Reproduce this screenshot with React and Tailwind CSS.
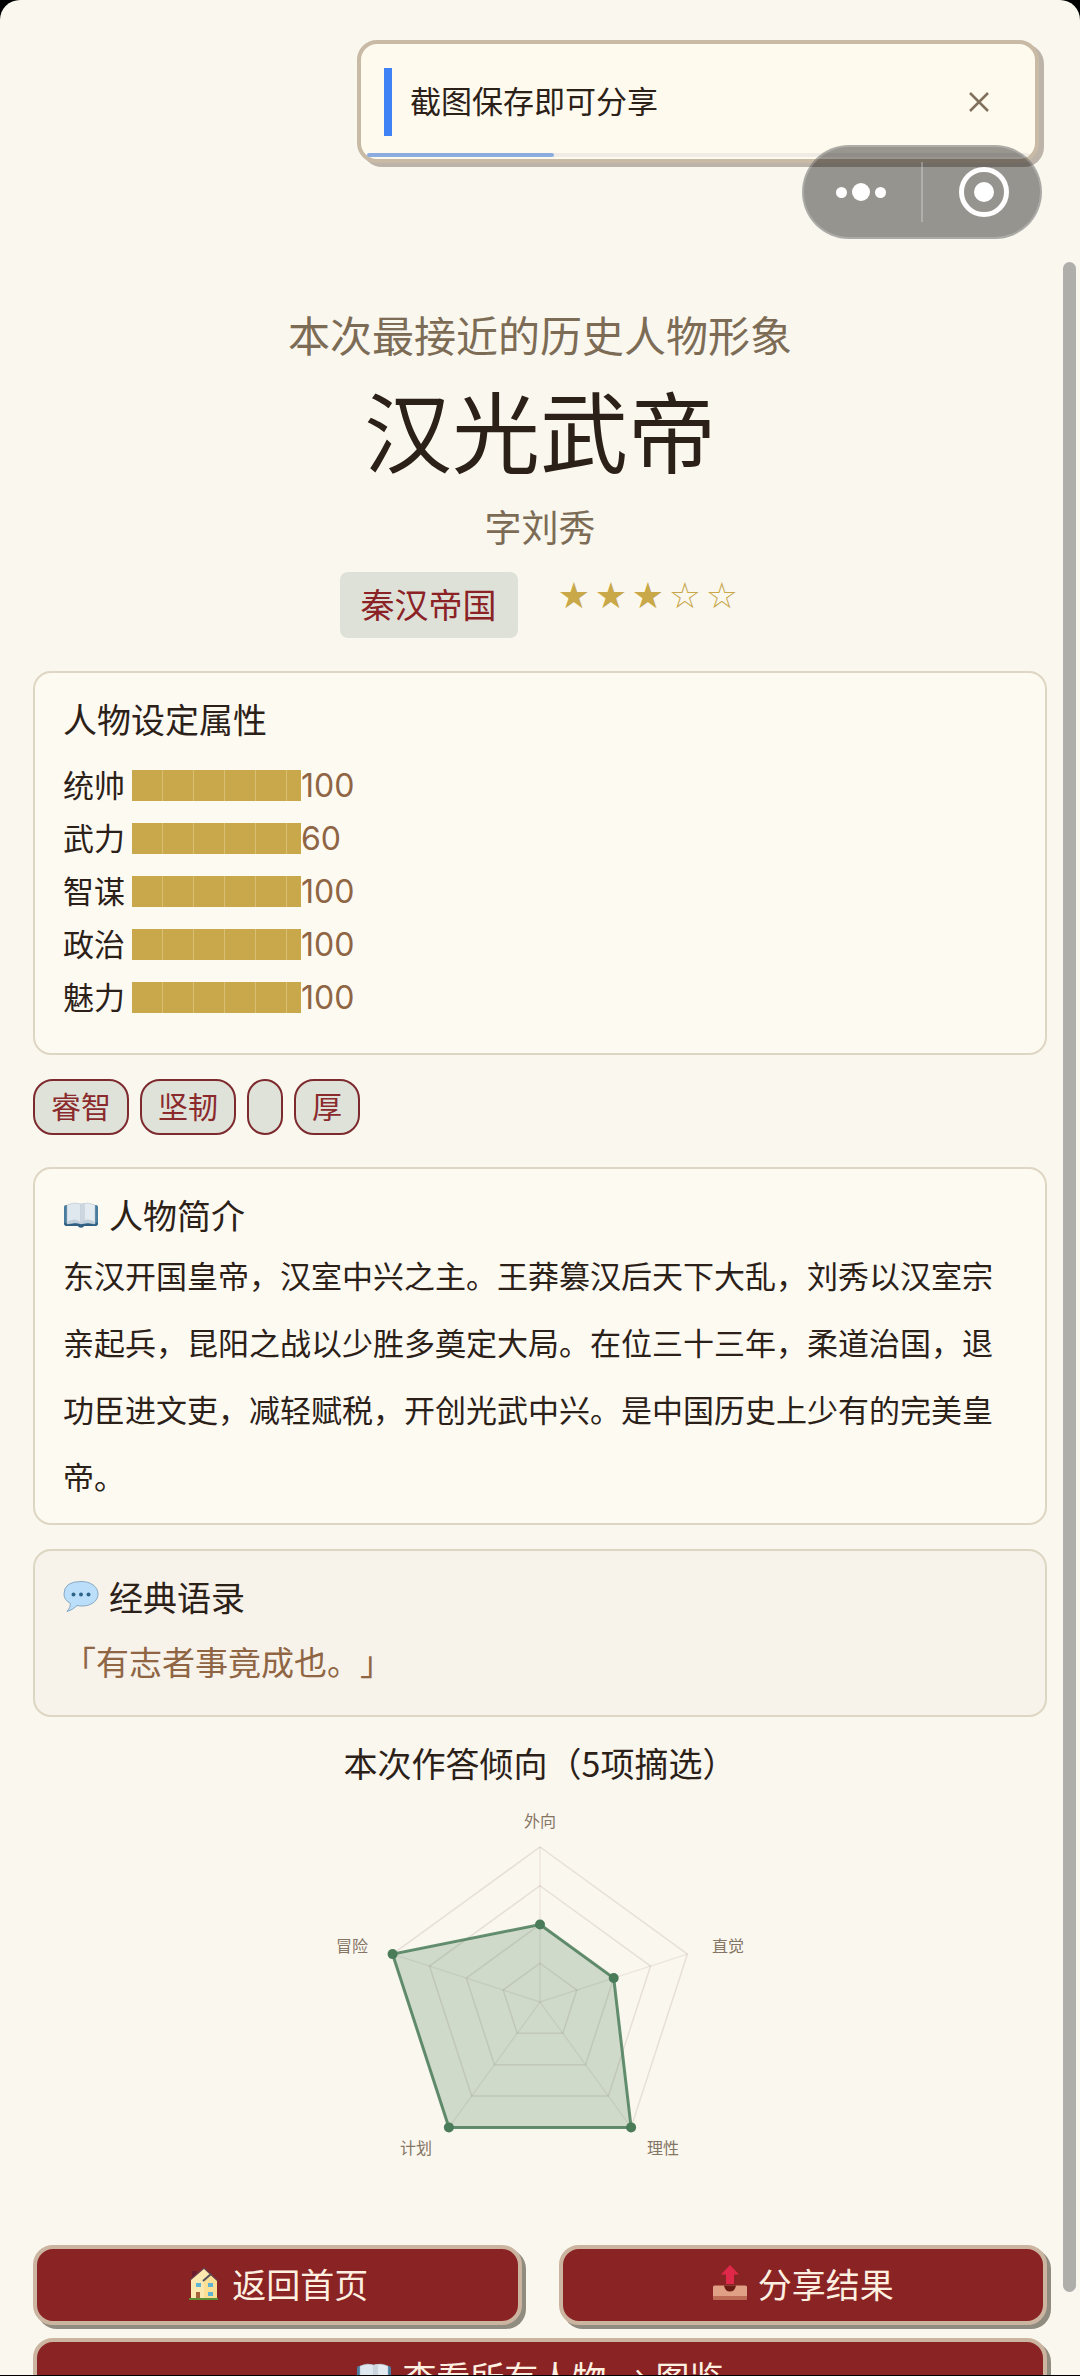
import { clsx } from 'clsx';

const ATTRIBUTES = [
    { name: '统帅', value: 100 },
    { name: '武力', value: 60 },
    { name: '智谋', value: 100 },
    { name: '政治', value: 100 },
    { name: '魅力', value: 100 },
];

const TRAITS = ['睿智', '坚韧', '', '厚'];

const RARITY = 3;

const TENDENCIES = [
    { name: '外向', value: 0.5, x: 0, y: -181 },
    { name: '直觉', value: 0.5, x: 188, y: -56 },
    { name: '理性', value: 1, x: 123, y: 146 },
    { name: '计划', value: 1, x: -124, y: 146 },
    { name: '冒险', value: 1, x: -188, y: -56 },
];

const RADIUS = 155;

const point = (index, ratio) => {
    const angle = (Math.PI * 2 * index) / TENDENCIES.length - Math.PI / 2;
    return [Math.cos(angle) * RADIUS * ratio, Math.sin(angle) * RADIUS * ratio];
};

const ring = (ratio) => TENDENCIES.map((_, i) => point(i, ratio).join(',')).join(' ');

function BookIcon() {
    return (
        <svg viewBox="0 0 36 28" className="h-7 w-9" aria-hidden="true">
            <path d="M1 6q0-2 2-2h30q2 0 2 2v16q0 3-3 3H21q-1 1.500-3 1.500T15 25H4q-3 0-3-3z" fill="#4a7c9e" />
            <path d="M1 21q0 1 2 1h30q2 0 2-1v1q0 3-3 3H21q-1 1.500-3 1.500T15 25H4q-3 0-3-3z" fill="#2f5f82" />
            <path d="M4 4q7-3.500 14-1v20q-3-1.500-7-1t-7 1z" fill="#dfe8ef" stroke="#a9b9c5" strokeWidth="0.500" />
            <path d="M32 4q-7-3.500-14-1v20q3-1.500 7-1t7 1z" fill="#e4ebf1" stroke="#a9b9c5" strokeWidth="0.500" />
            <path d="M18 3q2-1 4-1v19q-2 .5-4 2z" fill="#cbd6df" />
            <path d="M4 21q4-3 8-2.500t6 3.500q2-3 6-3.500t8 2.500v2q-4-1.500-7-1t-7 1q-3-1.500-7-1t-7 1z" fill="#c2d0db" />
        </svg>
    );
}

function SpeechIcon() {
    return (
        <svg viewBox="0 0 36 34" className="h-[34px] w-9" aria-hidden="true">
            <path
                d="M18 1.500C27.500 1.500 35 6.500 35 14S27.500 26 19 26q-3 0-5-.5Q10 30 4 31.500 7.500 28 7.500 23.500 1 20 1 14 1 1.500 18 1.500z"
                fill="#bbdffb"
                stroke="#86a9c4"
            />
            <circle cx="10.500" cy="14.500" r="2" fill="#2f6489" />
            <circle cx="18" cy="14.500" r="2" fill="#2f6489" />
            <circle cx="25.500" cy="14.500" r="2" fill="#2f6489" />
        </svg>
    );
}

function HouseIcon() {
    return (
        <svg viewBox="0 0 36 36" className="size-9" aria-hidden="true">
            <path d="M6 6h5v8H6z" fill="#6d1a2c" />
            <path d="M5 33V14L18 3l13 12v18z" fill="#fbe8b0" />
            <path d="M18 33V15l6-6 7 7v17z" fill="#fadf95" />
            <path d="M4 15L18 3l14 13" fill="none" stroke="#6b3844" strokeWidth="1.500" />
            <path d="M17 16l8-7" fill="none" stroke="#54525c" strokeWidth="2" />
            <path d="M10 18h5v4h-5zM22 18h5v4h-5zM22 27h5v4h-5z" fill="#5fb3d3" />
            <path d="M10 27h4v6h-4z" fill="#a5603c" />
            <path d="M3 33h29v2H3z" fill="#5f8f35" />
        </svg>
    );
}

function OutboxIcon() {
    return (
        <svg viewBox="0 0 36 36" className="size-9" aria-hidden="true">
            <path d="M1 22q0-1.500 1.500-1.500h31Q35 20.500 35 22v11q0 2-2 2H3q-2 0-2-2z" fill="#e0a085" />
            <path d="M1 31h34v2q0 2-2 2H3q-2 0-2-2z" fill="#bd6a56" />
            <path d="M12 20.500h12q-1 6-6 6t-6-6z" fill="#6b1c12" />
            <path d="M18 0l9 9.500h-5V19h-8V9.500H9z" fill="#e0294a" />
        </svg>
    );
}

function Card({ className, children }) {
    return (
        <section className={clsx('rounded-[18px] border-2 border-[#ddd6c2] px-7 pt-5', className)}>
            {children}
        </section>
    );
}

function CardTitle({ icon, children }) {
    return (
        <h2 className="flex h-[52px] items-center gap-[10px] text-[34px] leading-[52px]">
            {icon}
            {children}
        </h2>
    );
}

function ActionButton({ icon, className, children }) {
    return (
        <button
            type="button"
            className={clsx(
                'flex h-20 items-center justify-center gap-[10px] rounded-[20px] border-4 border-[#ccb5a0] bg-[#8a2324] pb-1 text-[34px] text-[#fdf0e0] shadow-[4px_4px_0_#918c80]',
                className,
            )}
        >
            {icon}
            {children}
        </button>
    );
}

function Toast() {
    return (
        <div
            role="status"
            className="absolute top-10 right-[41px] flex h-[123px] w-[682px] items-center rounded-[20px] border-4 border-[#c8baa5] bg-[#fefaee] pl-[23px] shadow-[5px_4px_0_#bcb3a9]"
        >
            <span className="h-[68px] w-2 bg-[#3f82f5]" />
            <p className="flex-1 pb-[3px] pl-[18px] text-[31px]">截图保存即可分享</p>
            <button type="button" aria-label="关闭" className="mr-[42px] p-1 text-[#80705c]">
                <svg viewBox="0 0 20 20" className="size-5" fill="none" stroke="currentColor" strokeWidth="2.500">
                    <path d="M1 1l18 18M19 1L1 19" />
                </svg>
            </button>
            <div className="absolute inset-x-[6px] bottom-[2px] h-1 rounded-full bg-[#f0ebe5]">
                <div className="h-full w-[187px] rounded-full bg-[#8cacdf]" />
            </div>
        </div>
    );
}

function Capsule() {
    return (
        <div className="absolute top-[145px] right-[38px] flex h-[94px] w-60 items-center rounded-full border-2 border-white/20 bg-black/40">
            <button type="button" aria-label="更多" className="flex flex-1 items-center justify-center gap-[5px] pr-1">
                <span className="size-[11px] rounded-full bg-white" />
                <span className="size-[18px] rounded-full bg-white" />
                <span className="size-[11px] rounded-full bg-white" />
            </button>
            <span className="h-[60px] w-[2px] bg-white/25" />
            <button type="button" aria-label="关闭小程序" className="flex flex-1 items-center justify-center pl-1">
                <span className="flex size-[50px] items-center justify-center rounded-full border-5 border-white">
                    <span className="size-5 rounded-full bg-white" />
                </span>
            </button>
        </div>
    );
}

function RadarChart() {
    return (
        <svg viewBox="-225 -195 450 390" className="mx-auto mt-5 h-[390px] w-[450px]" role="img" aria-label="作答倾向">
            <g fill="none" stroke="#7a5c50" strokeOpacity="0.15" strokeWidth="1.500">
                {[0.25, 0.5, 0.75, 1].map((ratio) => (
                    <polygon key={ratio} points={ring(ratio)} />
                ))}
                {TENDENCIES.map((item, i) => (
                    <line key={item.name} x2={point(i, 1)[0]} y2={point(i, 1)[1]} strokeOpacity="0.1" />
                ))}
            </g>
            <polygon
                points={TENDENCIES.map((item, i) => point(i, item.value).join(',')).join(' ')}
                fill="#4a7c59"
                fillOpacity="0.24"
                stroke="#4a7c59"
                strokeOpacity="0.85"
                strokeWidth="3"
            />
            {TENDENCIES.map((item, i) => (
                <circle key={item.name} cx={point(i, item.value)[0]} cy={point(i, item.value)[1]} r="5" fill="#4a7c59" />
            ))}
            {TENDENCIES.map((item) => (
                <text
                    key={item.name}
                    x={item.x}
                    y={item.y + 6}
                    textAnchor="middle"
                    className="fill-[#857565] text-[16px]"
                >
                    {item.name}
                </text>
            ))}
        </svg>
    );
}

export default function App() {
    return (
        <div className="h-screen bg-black pb-px font-['Noto_Sans_CJK_SC',sans-serif] text-[#2c2118] [text-spacing-trim:space-all]">
            <div className="relative h-full overflow-hidden rounded-t-[20px] bg-[#faf7ef]">
                <main className="flex flex-col px-[33px] pt-[304px]">
                    {/* Result header */}
                    <header className="flex flex-col items-center text-center">
                        <p className="text-[42px] leading-[60px] text-[#7d6c55]">本次最接近的历史人物形象</p>
                        <h1 className="mt-2 text-[88px] leading-[112px]">汉光武帝</h1>
                        <p className="mt-[18px] text-[37px] leading-[48px] text-[#7d6c55]">字刘秀</p>
                        <div className="mt-[22px] flex h-[66px] gap-[38px]">
                            <span className="flex items-center rounded-lg bg-[#dee1d8] px-[21px] pb-[3px] text-[34px] text-[#8a2226]">
                                秦汉帝国
                            </span>
                            <span className="flex h-12 items-center font-['DejaVu_Sans',sans-serif] text-[36px] text-[#c9a84a]">
                                {[1, 2, 3, 4, 5].map((n) => (
                                    <span key={n} className="w-[37px] text-center">
                                        {n <= RARITY ? '★' : '☆'}
                                    </span>
                                ))}
                            </span>
                        </div>
                    </header>

                    {/* Attributes */}
                    <Card className="mt-[33px] bg-[#fdfaf2] pb-[29px]">
                        <CardTitle>人物设定属性</CardTitle>
                        <ul className="mt-[14px]">
                            {ATTRIBUTES.map((attr) => (
                                <li key={attr.name} className="flex h-[53px] items-center text-[31px]">
                                    <span className="w-[69px] pb-[3px]">{attr.name}</span>
                                    <span className="flex h-[31px] w-[169px] overflow-hidden bg-[#c8a84a]">
                                        {[1, 2, 3, 4, 5, 6].map((n) => (
                                            <span key={n} className="w-[31px] shrink-0 border-r border-[#d8bf74]" />
                                        ))}
                                    </span>
                                    <span className="font-['Inter',sans-serif] text-[32px] text-[#8f6544]">
                                        {attr.value}
                                    </span>
                                </li>
                            ))}
                        </ul>
                    </Card>

                    {/* Traits */}
                    <ul className="mt-6 flex gap-[11px]">
                        {TRAITS.map((trait, i) => (
                            <li
                                key={i}
                                className="flex h-14 items-center rounded-[20px] border-2 border-[#7d2a2e] bg-[#dfe2d9] px-4 pb-[3px] text-[30px] text-[#8a2a2c]"
                            >
                                {trait}
                            </li>
                        ))}
                    </ul>

                    {/* Biography */}
                    <Card className="mt-8 bg-[#fdfaf2] pb-[14px]">
                        <CardTitle icon={<BookIcon />}>人物简介</CardTitle>
                        <p className="text-[31px] leading-[67px]">
                            东汉开国皇帝，汉室中兴之主。王莽篡汉后天下大乱，刘秀以汉室宗亲起兵，昆阳之战以少胜多奠定大局。在位三十三年，柔道治国，退功臣进文吏，减轻赋税，开创光武中兴。是中国历史上少有的完美皇帝。
                        </p>
                    </Card>

                    {/* Quote */}
                    <Card className="mt-6 bg-[#f7f2ea] pb-[27px]">
                        <CardTitle icon={<SpeechIcon />}>经典语录</CardTitle>
                        <blockquote className="mt-3 text-[33px] leading-[53px] text-[#8f6544]">「有志者事竟成也。」</blockquote>
                    </Card>

                    {/* Answer tendencies */}
                    <section className="mt-[22px]">
                        <h2 className="text-center text-[34px] leading-[48px]">本次作答倾向（5项摘选）</h2>
                        <RadarChart />
                    </section>

                    {/* Actions */}
                    <div className="mt-12 grid grid-cols-2 gap-x-[37px] gap-y-[13px]">
                        <ActionButton icon={<HouseIcon />}>返回首页</ActionButton>
                        <ActionButton icon={<OutboxIcon />}>分享结果</ActionButton>
                        <ActionButton icon={<BookIcon />} className="col-span-2">
                            查看所有人物 → 图鉴
                        </ActionButton>
                    </div>
                </main>

                <Toast />
                <Capsule />
                <div className="absolute top-[262px] right-1 bottom-[83px] w-[13px] rounded-full bg-[#b0aeab]" />
            </div>
        </div>
    );
}
